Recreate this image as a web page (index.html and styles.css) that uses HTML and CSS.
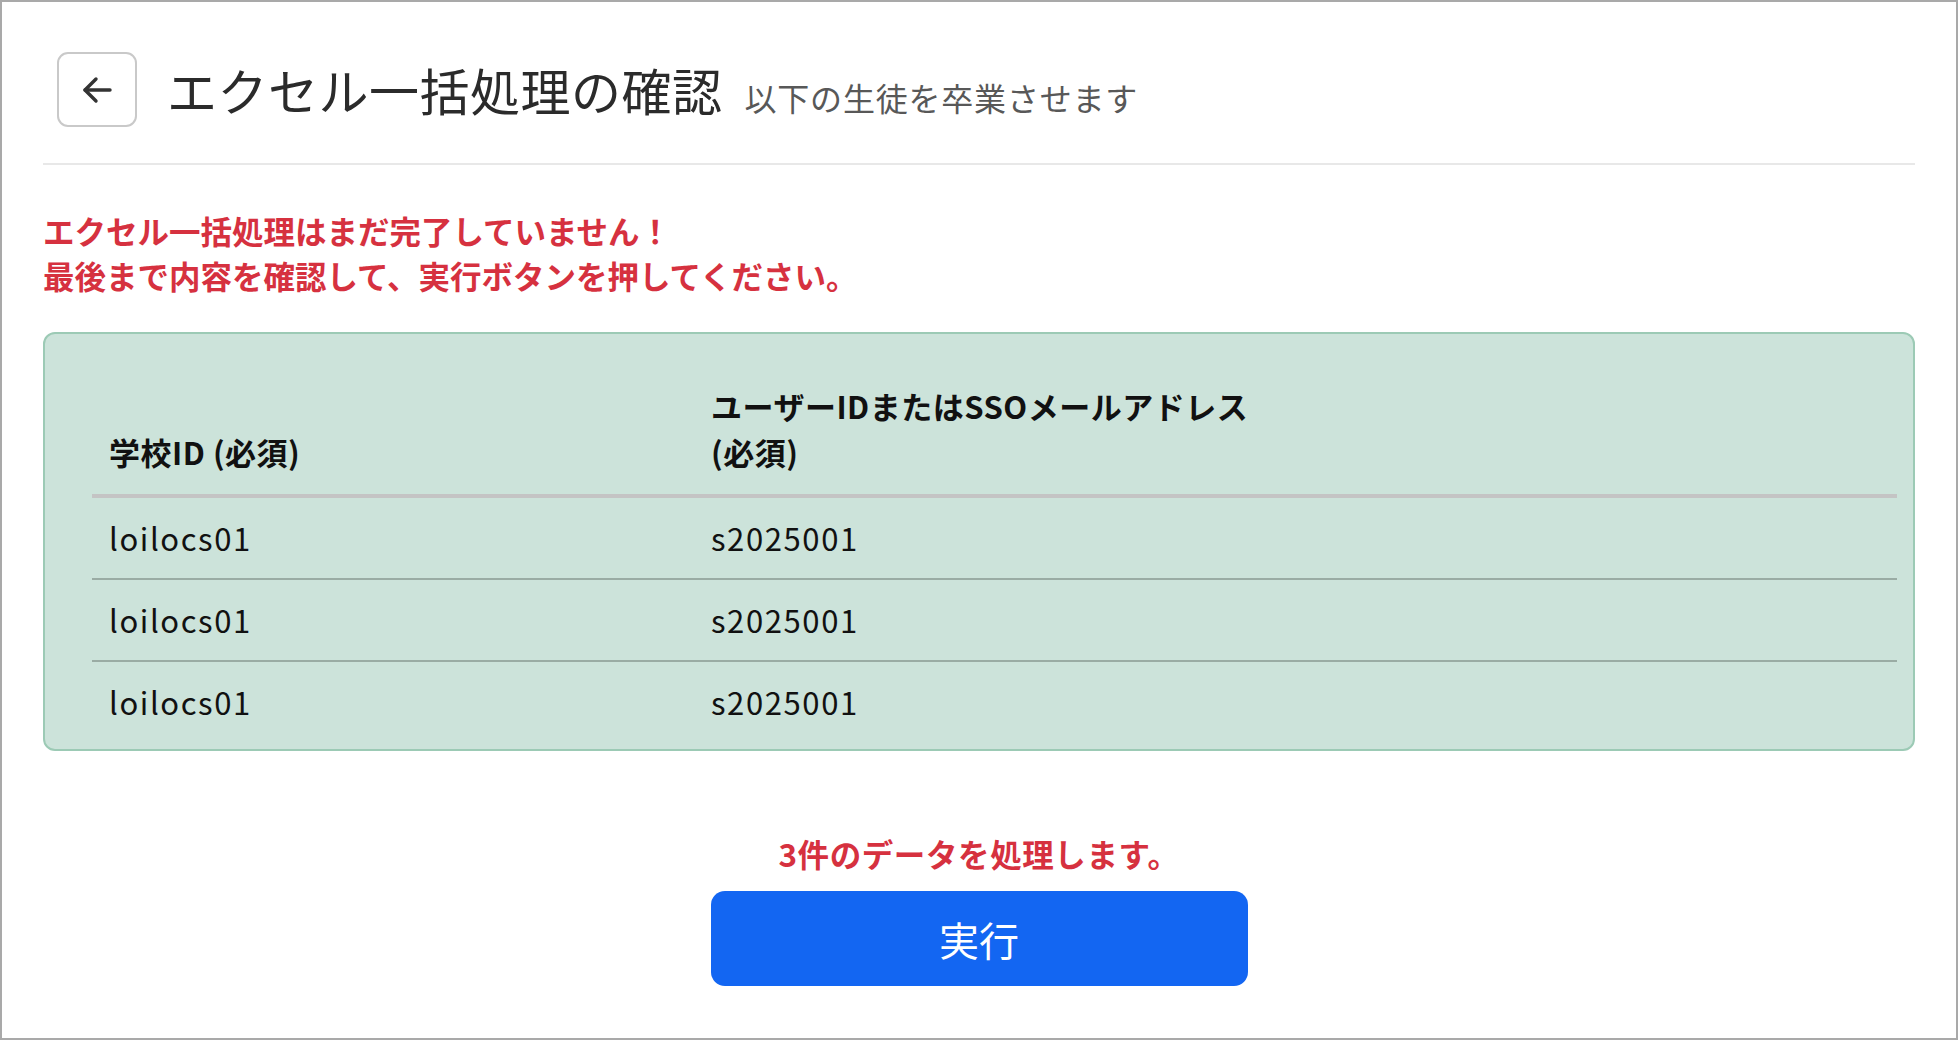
FILE: index.html
```html
<!DOCTYPE html>
<html lang="ja">
<head>
<meta charset="utf-8">
<title>エクセル一括処理の確認</title>
<link rel="stylesheet" href="styles.css">
</head>
<body>
<div class="page">
  <header class="page-header">
    <button class="back-btn" type="button" aria-label="戻る">
      <svg width="30" height="28" viewBox="0 0 30 28" fill="none" stroke="#333" stroke-width="3.4" stroke-linecap="round" stroke-linejoin="round">
        <path d="M28 14H3"/>
        <path d="M14 3L3 14L14 25"/>
      </svg>
    </button>
    <div class="title-group">
      <h1 class="title">エクセル一括処理の確認</h1>
      <span class="subtitle">以下の生徒を卒業させます</span>
    </div>
  </header>
  <hr class="divider">
  <div class="warning">
    <p>エクセル一括処理はまだ完了していません！</p>
    <p>最後まで内容を確認して、実行ボタンを押してください。</p>
  </div>
  <div class="data-box">
    <table class="data-table">
      <colgroup>
        <col class="col-school">
        <col class="col-user">
        <col>
      </colgroup>
      <thead>
        <tr>
          <th>学校ID (必須)</th>
          <th>ユーザーIDまたはSSOメールアドレス (必須)</th>
          <th></th>
        </tr>
      </thead>
      <tbody>
        <tr><td>loilocs01</td><td>s2025001</td><td></td></tr>
        <tr><td>loilocs01</td><td>s2025001</td><td></td></tr>
        <tr><td>loilocs01</td><td>s2025001</td><td></td></tr>
      </tbody>
    </table>
  </div>
  <div class="footer">
    <p class="count">3件のデータを処理します。</p>
    <button class="run-btn" type="button">実行</button>
  </div>
</div>
</body>
</html>
```
FILE: styles.css
```css
* { box-sizing: border-box; }
html, body {
  margin: 0;
  padding: 0;
}
body {
  width: 1958px;
  height: 1040px;
  border: 2px solid #a9a9a9;
  background: #fff;
  font-family: "Noto Sans CJK JP", "Noto Sans", sans-serif;
  color: #222;
  overflow: hidden;
}
.page {
  padding: 0 41px 0 41px;
}
.page-header {
  display: flex;
  align-items: center;
  padding-top: 50px;
  padding-left: 14px;
}
.back-btn {
  width: 80px;
  height: 75px;
  border: 2px solid #c9c9c9;
  border-radius: 11px;
  background: #fff;
  display: flex;
  align-items: center;
  justify-content: center;
  padding: 0;
  margin: 0;
}
.title-group {
  display: flex;
  align-items: baseline;
  margin-left: 30px;
  gap: 22px;
}
.title {
  margin: 0;
  font-size: 50px;
  font-weight: 400;
  color: #2b2b2b;
  line-height: 60px;
  letter-spacing: 0.5px;
}
.subtitle {
  font-size: 32px;
  color: #585858;
  letter-spacing: 0.8px;
}
.divider {
  margin: 36px 0 0 0;
  border: 0;
  height: 2px;
  background: #e8e8e8;
}
.warning {
  margin-top: 43px;
  color: #d6313f;
  font-weight: 700;
  font-size: 31.5px;
  line-height: 45px;
}
.warning p { margin: 0; }
.data-box {
  margin-top: 34px;
  background: #cce3da;
  border: 2px solid #9ccab5;
  border-radius: 12px;
  padding: 32px 16px 7px 47px;
}
.data-table {
  width: 100%;
  border-collapse: collapse;
  table-layout: fixed;
  font-size: 31px;
  line-height: 46px;
  color: #111;
}
.col-school { width: 602px; }
.col-user { width: 600px; }
.data-table th {
  text-align: left;
  vertical-align: bottom;
  font-weight: 700;
  padding: 17px 17px 19px 17px;
  border-bottom: 4px solid #c4c4c4;
  letter-spacing: 0.5px;
}
.data-table td {
  padding: 17px;
  letter-spacing: 1.6px;
}
.data-table tbody tr + tr td {
  border-top: 2px solid #9aaca4;
}
.footer {
  display: flex;
  flex-direction: column;
  align-items: center;
  margin-top: 80px;
}
.count {
  margin: 0;
  color: #d6313f;
  font-weight: 700;
  font-size: 31.5px;
  line-height: 45px;
  letter-spacing: 0.6px;
}
.run-btn {
  margin-top: 15px;
  width: 537px;
  height: 95px;
  border: 0;
  border-radius: 14px;
  background: #1366f2;
  color: #fff;
  font-family: "Noto Sans CJK JP", "Noto Sans", sans-serif;
  font-size: 40px;
  font-weight: 400;
}
```
